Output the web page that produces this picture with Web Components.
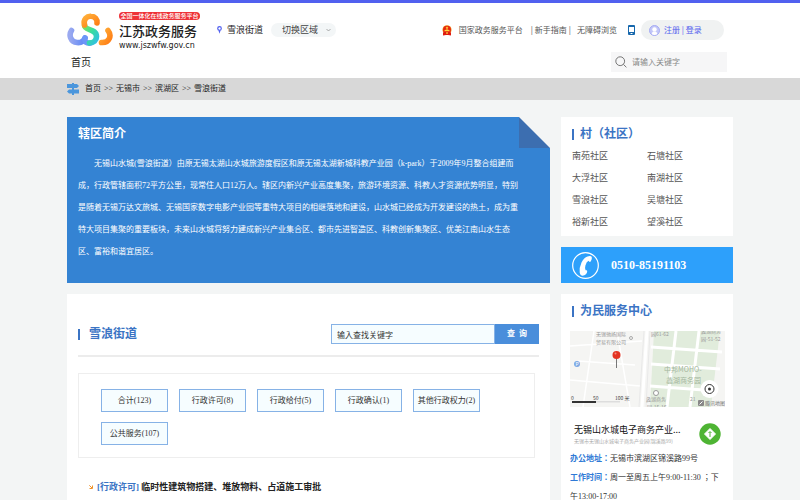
<!DOCTYPE html>
<html>
<head>
<meta charset="utf-8">
<title>江苏政务服务 - 雪浪街道</title>
<style>
html{scrollbar-width:none}
body{margin:0;background:#f3f5f5;color:#333;font:8px/12px "Liberation Serif","Noto Sans CJK JP","Noto Sans CJK SC",serif}
</style>
</head>
<body>
<portal-page></portal-page>

<template id="t-page">
<style>
:host{display:block;min-height:100vh}
main{display:grid;grid-template-columns:minmax(0,1fr) 172px;gap:11px;padding:17px 67px 0}
.side{display:flex;flex-direction:column;gap:11px}
.side community-card{flex:1}
</style>
<site-header></site-header>
<crumb-bar></crumb-bar>
<main>
<intro-card>
<span slot="title">辖区简介</span>
无锡山水城(雪浪街道）由原无锡太湖山水城旅游度假区和原无锡太湖新城科教产业园（k-park）于2009年9月整合组建而<br>成，行政管辖面积72平方公里，现常住人口12万人。辖区内新兴产业高度集聚，旅游环境资源、科教人才资源优势明显，特别<br>是随着无锡万达文旅城、无锡国家数字电影产业园等重特大项目的相继落地和建设，山水城已经成为开发建设的热土，成为重<br>特大项目集聚的重要板块，未来山水城将努力建成新兴产业集合区、都市先进智造区、科教创新集聚区、优美江南山水生态<br>区、富裕和谐宜居区。
</intro-card>
<div class="side"><community-card></community-card><phone-card>0510-85191103</phone-card></div>
<service-list></service-list>
<center-card></center-card>
</main>
</template>

<template id="t-header">
<style>
:host{display:block;box-sizing:border-box;height:78px;border-top:3px solid #5160ef;background:#fff;padding:9px 67px 0;font-family:"Noto Sans CJK SC",sans-serif;color:#444}
a{color:inherit;text-decoration:none}
.top{display:flex;align-items:center;height:36px}
.loc{display:flex;align-items:center;gap:5px;margin-left:17px;font-size:9px;color:#222}
.sel{position:relative;margin-left:8px;display:flex}
select{appearance:none;border:0;border-radius:7px;background:#f3f6f7;width:65px;height:14px;padding:0 0 0 11px;font:9px/14px "Noto Sans CJK SC",sans-serif;color:#444}
.sel svg{position:absolute;right:5px;top:5px;pointer-events:none}
.links{margin-left:auto;display:flex;align-items:center;padding-right:9px;white-space:nowrap;color:#555}
.bar{margin:0 2px}
.links .bar:first-of-type{margin-left:8px}
.p{margin-left:4px}
.g{margin-left:7px}
.mobile{margin-left:11px}
.acct{display:flex;align-items:center;box-sizing:border-box;width:83px;height:20px;border-radius:10px;background:#f0f2f2;margin-left:6px;padding-left:8px;color:#5562ee}
.acct svg{margin-right:4px}
.nav{display:flex;align-items:center;justify-content:space-between;padding:4px 6px 0 4px}
.nav>a{font-size:10px;line-height:20px;color:#222}
.find{display:flex;align-items:center;gap:5px;box-sizing:border-box;width:116px;height:20px;background:#f6f6f7;padding-left:4px}
.find input{flex:1;min-width:0;border:0;outline:0;background:none;padding:0;font:8px/12px "Noto Sans CJK SC",sans-serif}
.find input::placeholder{color:#888}
</style>
<div class="top">
<site-logo></site-logo>
<div class="loc"><svg width="5" height="8" viewBox="0 0 5 8"><circle cx="2.5" cy="2.5" r="1.8" fill="#fff" stroke="#5160ef" stroke-width="1.2"/><path d="M1.5 4.5L2.5 7.8L3.5 4.5z" fill="#5160ef"/></svg><span>雪浪街道</span></div>
<div class="sel"><select aria-label="切换区域"><option>切换区域</option></select><svg width="5" height="4" viewBox="0 0 5 4"><path d="M.5 1L2.5 3L4.5 1" fill="none" stroke="#888" stroke-width=".7"/></svg></div>
<div class="links">
<svg width="10" height="11" viewBox="0 0 10 11"><circle cx="5" cy="4.8" r="4.600" fill="#efa92e"/><circle cx="5" cy="4.800" r="4" fill="#e8260f"/><path d="M5 1.3l.5 1h1l-.8.7.3 1-1-.6-1 .6.3-1-.8-.7h1zM2.500 5.200L5 4.200l2.500 1v1h-5z" fill="#ffd83c"/><path d="M1 7.500l3-.7h2l3 .7v3L6 10H4l-3 .5z" fill="#df1b10"/><circle cx="5" cy="8" r="1" fill="#f5b334"/></svg>
<a class="g" href="#">国家政务服务平台</a><span class="bar">|</span><a href="#">新手指南</a><span class="bar">|</span><a class="p" href="#">无障碍浏览</a>
<svg class="mobile" width="7" height="10" viewBox="0 0 7 10"><rect width="7" height="10" rx="1" fill="#1768ad"/><path d="M1 2h5v5H1z" fill="#fff"/><path d="M2.5 8h2v1h-2z" fill="#fff"/></svg>
<div class="acct"><svg width="11" height="11" viewBox="0 0 11 11"><circle cx="5.5" cy="5.5" r="5" fill="#c3c7f8" stroke="#a5abf3"/><circle cx="5.5" cy="4.400" r="2.200" fill="#fff"/><path d="M2.600 9Q2.800 7.400 4.500 6.600H6.500Q8.200 7.400 8.400 9Q5.500 10.800 2.600 9" fill="#fff"/></svg><a href="#">注册</a><span>&nbsp;|&nbsp;</span><a href="#">登录</a></div>
</div>
</div>
<div class="nav"><a href="#">首页</a><label class="find"><svg width="12" height="12" viewBox="0 0 12 12" fill="none" stroke="#666" stroke-width=".9"><circle cx="5.2" cy="5.2" r="4.4"/><path d="M8.4 8.4L11.4 11.3"/></svg><input type="text" placeholder="请输入关键字" aria-label="请输入关键字"></label></div>
</template>

<template id="t-logo">
<style>
:host{display:flex;align-items:center;gap:6px;color:#222}
.t{display:flex;flex-direction:column;width:81px;white-space:nowrap;padding-top:2px}
b{display:block;background:#ee3136;color:#fff;border-radius:4px;font-size:6px;line-height:8px;text-align:center;font-weight:500}
strong{font-weight:500;font-size:13px;line-height:20px;margin-top:1px}
small{font:8px/9px "DejaVu Sans",sans-serif}
</style>
<svg width="46" height="34" viewBox="0 0 46 34" fill="none" stroke-width="5.6" stroke-linecap="round">
<defs><linearGradient id="a" x1="0" y1="0" x2="1" y2="1"><stop stop-color="#7ee35c"/><stop offset=".5" stop-color="#39dca0"/><stop offset="1" stop-color="#31bfe2"/></linearGradient><linearGradient id="b" x1="0" y1="0" x2="1" y2="0"><stop stop-color="#9aa9f0"/><stop offset="1" stop-color="#5c86f6"/></linearGradient><linearGradient id="c" x1="0" y1="0" x2="1" y2="1"><stop stop-color="#ffae38"/><stop offset="1" stop-color="#ff7e16"/></linearGradient></defs>
<path d="M4.5 17.5C1.5 22 3.5 29 10 29.5C14.5 30 17 27.5 18 25" stroke="url(#b)"/>
<path d="M18 25C17 29 20 30.5 23.5 30" stroke="#6c96f8"/>
<path d="M17.5 12C17 18 29.5 15 29.5 23.5C29.5 27.5 26.5 30 22.5 30" stroke="url(#a)"/>
<path d="M17.5 12C16 6 20 3 24 3.3C28 3.5 30.5 6.5 30 10" stroke="url(#c)"/>
<path d="M41 17.5C45 22.5 42.5 30 34.5 29.5" stroke="url(#c)"/>
</svg>
<div class="t"><b>全国一体化在线政务服务平台</b><strong>江苏政务服务</strong><small>www.jszwfw.gov.cn</small></div>
</template>

<template id="t-crumb">
<style>
:host{display:flex;align-items:center;gap:6px;height:22px;background:#d8d8d8;padding:0 67px;color:#222}
nav{display:flex;gap:3px}
a{color:inherit;text-decoration:none}
</style>
<svg width="12" height="12" viewBox="0 0 12 12" fill="#4b96dc"><path d="M5 0h2v12H5zM0 1h10l2 2-2 2H0zM2 6.500h10v4H2L0 8.500z"/></svg>
<nav><a href="#">首页</a><span>&gt;&gt;</span><a href="#">无锡市</a><span>&gt;&gt;</span><a href="#">滨湖区</a><span>&gt;&gt;</span><a href="#">雪浪街道</a></nav>
</template>

<template id="t-intro">
<style>
:host{display:block;position:relative;background:linear-gradient(225deg,#f3f5f5 22px,#3483d3 22px);color:#fff;padding:9px 11px 18px;min-height:139px}
:host::after{content:"";position:absolute;top:0;right:0;width:31px;height:31px;background:#3c6eb0;clip-path:polygon(0 0,100% 100%,0 100%)}
h2{margin:0 0 11px;font-size:12px;line-height:16px}
p{margin:0;font-size:8px;line-height:22px;text-indent:2em}
</style>
<h2><slot name="title"></slot></h2><p><slot></slot></p>
</template>

<template id="t-heading">
<style>
:host{display:flex;align-items:center;gap:var(--gap,6px);color:#3b74c4}
:host::before{content:"";width:2px;height:11px;background:currentColor}
h2{margin:0;font-size:12px;line-height:16px}
</style>
<h2><slot></slot></h2>
</template>

<template id="t-community">
<style>
:host{display:block;background:#fff;padding:9px 11px 0}
ul{list-style:none;margin:3px 0 0;padding:0;display:grid;grid-template-columns:1fr 1fr;font-size:9px;line-height:22px}
a{color:#555;text-decoration:none}
</style>
<section-title>村（社区）</section-title>
<ul><li><a href="#">南苑社区</a></li><li><a href="#">石塘社区</a></li><li><a href="#">大浮社区</a></li><li><a href="#">南湖社区</a></li><li><a href="#">雪浪社区</a></li><li><a href="#">吴塘社区</a></li><li><a href="#">裕新社区</a></li><li><a href="#">望溪社区</a></li></ul>
</template>

<template id="t-phone">
<style>
:host{display:flex;align-items:center;gap:12px;height:36px;background:#2da0fb;color:#fff;padding-left:11px;font-size:12px;font-weight:bold}
</style>
<svg width="27" height="27" viewBox="0 0 27 27"><circle cx="13.500" cy="13.500" r="12.800" fill="none" stroke="#fff" stroke-width="1.200"/><path d="M15.500 4.500Q19 3.500 19.800 5Q20.300 7.500 18.700 9.600Q17.300 10.500 16.600 8.800Q14.500 9.600 13.400 13.500Q12.500 16.800 13.600 18.300Q15.400 17.800 15.200 19.500Q14.800 22.500 11.500 23.600Q8.500 24.300 7.700 20.500Q7 16 9.500 10.500Q12 5.600 15.500 4.500z" fill="#fff"/></svg><span><slot></slot></span>
</template>

<template id="t-list">
<style>
:host{display:block;background:#fff;padding:30px 11px 0}
.head{display:flex;justify-content:space-between;align-items:center;border-bottom:2px solid #ececec;padding-bottom:11px}
section-title{--gap:9px}
form{display:flex;width:208px}
input{flex:1;min-width:0;box-sizing:border-box;height:20px;border:1px solid #86b2e6;background:#f6fdff;padding:0 5px;font:inherit;color:#333;outline:0}
form button{width:44px;border:0;padding:0;background:#4a8edb;color:#fff;font:bold 8px/20px "Liberation Serif","Noto Sans CJK JP","Noto Sans CJK SC",serif}
.tags{display:grid;grid-template-columns:repeat(auto-fill,67px);gap:10px 11px;border:1px solid #eee;margin:16px 4px 0 0;padding:15px 22px 12px}
.tags button{height:23px;border:1px solid #86b2e6;background:#f6fdff;padding:0;font:inherit;color:#333;white-space:nowrap}
.item{display:flex;align-items:center;gap:4px;margin:21px 0 0;padding-left:11px;font-size:9px;line-height:16px;font-weight:bold}
.item a{color:#222;text-decoration:none}
.item span{color:#3b74c4}
</style>
<div class="head"><section-title>雪浪街道</section-title><form><input type="text" value="输入查找关键字" aria-label="输入查找关键字"><button type="button">查&nbsp; 询</button></form></div>
<div class="tags"><button>合计(123)</button><button>行政许可(8)</button><button>行政给付(5)</button><button>行政确认(1)</button><button>其他行政权力(2)</button><button>公共服务(107)</button></div>
<h3 class="item"><svg width="4" height="4" viewBox="0 0 4 4" fill="none" stroke="#f0932b"><path d="M.3.3L3 3M3.500.5v3h-3"/></svg><a href="#"><span>[行政许可]</span> 临时性建筑物搭建、堆放物料、占道施工审批</a></h3>
</template>

<template id="t-center">
<style>
:host{display:block;background:#fff;padding:9px 8px 0 9px}
section-title{margin-left:2px}
.map{display:block;width:100%;margin-top:12px;font-family:"Noto Sans CJK SC",sans-serif}
.place{display:flex;align-items:center;justify-content:space-between;padding:16px 4px 0;font-family:"Noto Sans CJK SC",sans-serif}
.place div{white-space:nowrap}
b{display:block;font-size:9px;line-height:14px;font-weight:400;color:#111}
small{display:block;font-size:5px;line-height:8px;color:#aaa}
p{margin:4px 0 0;line-height:19px}
p+p{margin:0}
p span{color:#2f7ad6;font-weight:bold}
</style>
<section-title>为民服务中心</section-title>
<svg class="map" viewBox="0 0 155 76" font-size="6" fill="#999">
<path d="M0 0h155v76H0z" fill="#f5f5f3"/>
<path d="M84 0h66l-9 76H80z" fill="#e1ecdc"/>
<path d="M24 0L13 76M0 49L70 55M0 15L72 10M47 0L60 76M8 30L65 34" stroke="#fff" stroke-width="1.500" fill="none"/>
<path d="M77 0L72 76M106 0L97 76M129 0L120 76M81 16L152 21M81 33L150 38M80 55L147 60" stroke="#fff" stroke-width="3" fill="none"/>
<path d="M74 0L69 76M80 0L76 76" stroke="#e9e9e9" fill="none"/>
<g font-size="5"><text x="26" y="5">无锡驰扬国际</text><text x="26" y="13">贸易有限公司</text></g><circle cx="61" cy="7" r="1.500" fill="none" stroke="#aaa"/>
<g font-size="5"><text x="81" y="5">园61-62</text><text x="131" y="2">蠡湖商务</text><text x="131" y="10">园-51-52</text></g>
<g font-size="7" fill="#a4b69c"><text x="94" y="41">中邦MOHO-</text><text x="96" y="52">蠡湖商务园</text></g>
<circle cx="7" cy="33" r="3" fill="#7da9e4"/><text x="5.500" y="35" font-size="5" fill="#fff">P</text>
<path d="M46.500 26v11" stroke="#777"/><circle cx="46.500" cy="24" r="4" fill="#e33422"/><circle cx="45.500" cy="22.500" r="1" fill="#f48c7e"/>
<circle cx="86" cy="62" r="2.500" fill="#fff" stroke="#999"/><g font-size="5"><text x="76" y="70">蠡湖商务</text><text x="77" y="78">园-15-16</text><text x="120" y="70">21</text></g>
<circle cx="139.500" cy="58" r="9" fill="#fff"/><circle cx="139.500" cy="58" r="4.500" fill="none" stroke="#333"/><circle cx="139.500" cy="58" r="1.500" fill="#333"/>
<g font-size="5" fill="#444"><text x="1" y="69">0</text><text x="23" y="69">50</text><text x="45" y="69">100 米</text></g>
<path d="M2 70h48v1.500H2z" fill="#ddd"/><path d="M2 70h24v2H2z" fill="#333"/>
<rect x="128" y="69" width="6" height="6" rx="1" fill="#888"/><path d="M129.500 73.500L132.500 70.500" stroke="#fff"/><text x="135" y="74" font-size="5" fill="#777">腾讯地图</text>
</svg>
<div class="place"><div><b>无锡山水城电子商务产业...</b><small>无锡市无锡山水城电子商务产业园(锦溪路99)</small></div><svg width="22" height="22" viewBox="0 0 22 22"><circle cx="11" cy="11" r="10.700" fill="#4eb433"/><path d="M11 5.500L16.500 11L11 16.500L5.500 11z" fill="#fff" stroke="#fff" stroke-linejoin="round"/><path d="M11 14v-5M9.500 10L11 8.500L12.500 10" stroke="#4eb433" fill="none"/></svg></div>
<p><span>办公地址：</span>无锡市滨湖区锦溪路99号</p>
<p><span>工作时间：</span>周一至周五上午9:00-11:30 ；下<br>午13:00-17:00</p>
</template>

<script>
const define=(name,tpl)=>customElements.define(name,class extends HTMLElement{
  constructor(){
    super();
    this.attachShadow({mode:"open"}).append(document.getElementById(tpl).content.cloneNode(true));
  }
});
define("section-title","t-heading");
define("site-logo","t-logo");
define("site-header","t-header");
define("crumb-bar","t-crumb");
define("intro-card","t-intro");
define("community-card","t-community");
define("phone-card","t-phone");
define("service-list","t-list");
define("center-card","t-center");
define("portal-page","t-page");
</script>
</body>
</html>
